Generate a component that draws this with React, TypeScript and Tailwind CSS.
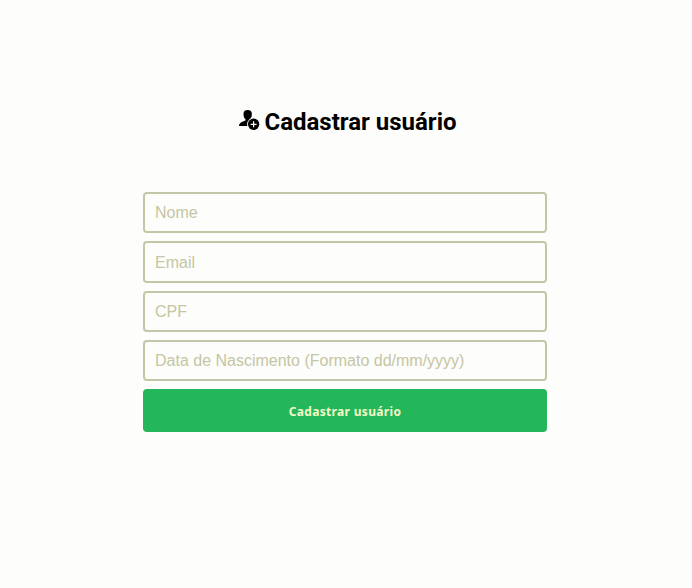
import React from "react";

const fields = ["Nome", "Email", "CPF", "Data de Nascimento (Formato dd/mm/yyyy)"];

function UserAddIcon() {
  return (
    <svg width="21" height="20" viewBox="0 0 21 20" fill="none" aria-hidden="true">
      <path
        d="M8.6 0C11.5 0 13 1.6 12.9 4.2C12.8 6.8 11.9 8.4 10.8 9.2V10.2L13 12V16H0C0 13.4 1.4 12.3 4 11.4C5.9 10.8 6.6 10.6 6.6 9.8V9.2C5.4 8.4 4.6 6.8 4.5 4.2C4.4 1.6 5.8 0 8.6 0Z"
        fill="#000"
      />
      <circle cx="14.6" cy="14.3" r="6.6" fill="#fdfdfc" />
      <circle cx="14.6" cy="14.3" r="5.7" fill="#000" />
      <path d="M14.6 11.3V17.3M11.6 14.3H17.6" stroke="#fdfdfc" strokeWidth="1.2" />
    </svg>
  );
}

export default function App() {
  return (
    <main className="flex h-[588px] w-[692px] flex-col items-center bg-[#fdfdfc] pt-[106px]">
      <h1 className="ml-1 flex h-8 items-center gap-1 font-['Roboto',sans-serif] text-2xl font-bold text-black">
        <span className="mb-[5px]"><UserAddIcon /></span>
        <span>Cadastrar usuário</span>
      </h1>
      <form className="mt-[54px] ml-[-2px] flex w-[404px] flex-col gap-2">
        {fields.map((label) => (
          <input
            key={label}
            placeholder={label}
            className="h-[41.33px] w-full rounded-[4px] border-2 border-[#c5c5a8] bg-transparent px-2.5 pt-[1.5px] font-['Liberation_Sans',sans-serif] text-base text-[#333] outline-none placeholder:text-[#c5c5a2] placeholder:opacity-100"
          />
        ))}
        <button
          type="button"
          className="h-[43px] w-full rounded-[4px] bg-[#24b65b] pt-[2px] font-['Noto_Sans',sans-serif] text-[12px] font-bold tracking-[0.33px] text-[#f0fbc8]"
        >
          Cadastrar usuário
        </button>
      </form>
    </main>
  );
}
